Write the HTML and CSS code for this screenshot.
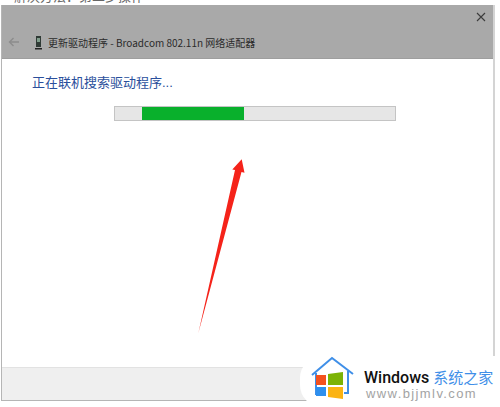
FILE: index.html
```html
<!DOCTYPE html>
<html lang="zh-CN">
<head>
    <meta charset="UTF-8">
    <title>更新驱动程序</title>
    <link rel="stylesheet" href="styles.css">
</head>
<body>
    <div class="top-strip"><span>解决方法：第二步操作</span></div>

    <div class="window">
        <div class="titlebar">
            <div class="close-row">
                <svg class="close" width="10" height="10" viewBox="0 0 10 10">
                    <path d="M1 1L9 9M9 1L1 9" stroke="#3c3c3c" stroke-width="1.1" fill="none"/>
                </svg>
            </div>
            <div class="title-row">
                <svg class="back" width="12" height="10" viewBox="0 0 12 10">
                    <path d="M5.5 1L1.5 5L5.5 9M1.5 5H11" stroke="#8c8c8c" stroke-width="1.4" fill="none"/>
                </svg>
                <svg class="device" width="7" height="15" viewBox="0 0 7 15">
                    <rect x="1" y="1" width="5" height="11" fill="#2f3a35"/>
                    <rect x="2" y="3" width="3" height="4" fill="#7f9c8a"/>
                    <rect x="0" y="13" width="7" height="1.5" fill="#222"/>
                </svg>
                <span class="title-text">更新驱动程序 - Broadcom 802.11n 网络适配器</span>
            </div>
        </div>

        <div class="content">
            <div class="heading">正在联机搜索驱动程序...</div>
            <div class="progress">
                <div class="progress-fill"></div>
            </div>
        </div>

        <div class="footer"></div>
    </div>

    <svg class="arrow" width="60" height="180" viewBox="190 157 60 180">
        <polygon points="241.7,159.3 244.5,172.7 241.5,172 198.3,333.3 235,170 232.3,169.5" fill="#f5231a"/>
    </svg>

    <div class="logo">
        <svg class="logo-mark" width="48" height="46" viewBox="0 0 48 46">
            <path d="M2 19L22 2L43 18M6 17V39M38 15V37H34" stroke="#3f8fe8" stroke-width="2" fill="none"/>
            <rect x="6" y="19" width="10" height="10" fill="#f4511e"/>
            <polygon points="18,18 33,16 33,29 18,29" fill="#7cb305"/>
            <rect x="6" y="31" width="10" height="9" fill="#2e8fee"/>
            <polygon points="18,31 33,31 33,43 18,41" fill="#fbb313"/>
        </svg>
        <div class="logo-text">
            <div class="logo-name">Windows <span class="logo-cn">系统之家</span></div>
            <div class="logo-url">www.bjjmlv.com</div>
        </div>
    </div>
</body>
</html>
```

FILE: styles.css
```css
* {
    margin: 0;
    padding: 0;
    box-sizing: border-box;
}

body {
    width: 500px;
    height: 407px;
    overflow: hidden;
    position: relative;
    background: white;
    font-family: "Noto Sans CJK SC", "Liberation Sans", sans-serif;
}

.top-strip {
    height: 4px;
    margin-bottom: 1px;
    padding-left: 14px;
    overflow: hidden;
    font-size: 13px;
    line-height: 13px;
    color: #666;
}

.top-strip span {
    display: block;
    margin-top: -11px;
}

.window {
    width: 494px;
    height: 396px;
    margin-left: 1px;
    display: flex;
    flex-direction: column;
    border-right: 2px solid #d4d4d4;
    border-left: 1px solid #b5b5b5;
    border-bottom: 1px solid #b5b5b5;
}

.titlebar {
    height: 54px;
    background: #a9a9a9;
    border-bottom: 1px solid #9e9e9e;
    display: flex;
    flex-direction: column;
}

.close-row {
    display: flex;
    justify-content: flex-end;
    padding: 7px 7px 0 0;
    height: 27px;
}

.title-row {
    display: flex;
    align-items: center;
    height: 20px;
    padding-left: 6px;
    color: #2b2b2b;
}

.device {
    margin-left: 15px;
    margin-right: 6px;
}

.title-text {
    font-size: 10px;
    white-space: nowrap;
}

.content {
    flex: 1;
    padding: 14px 0 0 30px;
}

.heading {
    font-family: "Liberation Sans", "Noto Sans CJK SC", sans-serif;
    font-size: 13px;
    line-height: 20px;
    color: #2a4f9c;
}

.progress {
    width: 282px;
    height: 15px;
    margin: 13px 0 0 82px;
    padding-left: 27px;
    background: #e6e6e6;
    border: 1px solid #c4c4c4;
}

.progress-fill {
    width: 102px;
    height: 100%;
    background: #09b02c;
}

.footer {
    height: 33px;
    background: #efefef;
    border-top: 1px solid #e2e2e2;
}

.arrow {
    position: absolute;
    left: 190px;
    top: 157px;
}

.logo {
    position: absolute;
    left: 300px;
    top: 356px;
    width: 200px;
    height: 51px;
    padding-left: 10px;
    display: flex;
    background: white;
    border-radius: 22px 0 0 22px;
}

.logo-mark {
    flex: none;
}

.logo-text {
    margin-left: 6px;
    padding-top: 11px;
    white-space: nowrap;
}

.logo-name {
    font-family: Roboto, "Liberation Sans", sans-serif;
    font-weight: 500;
    font-size: 16px;
    line-height: 19px;
    color: #111;
}

.logo-cn {
    font-family: "Noto Sans CJK SC", sans-serif;
    font-weight: 400;
    font-size: 15px;
    color: #3f8fe8;
}

.logo-url {
    font-family: "Liberation Sans", sans-serif;
    font-size: 13px;
    line-height: 13px;
    letter-spacing: 1.4px;
    color: #a3a3a3;
    padding-left: 2px;
}
```
